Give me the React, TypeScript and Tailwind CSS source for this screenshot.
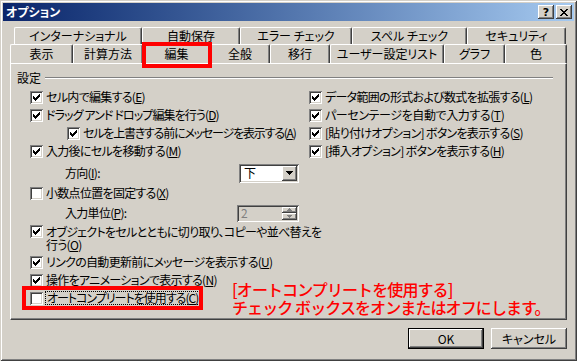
import React from "react";

const RAISED =
  "shadow-[inset_-1px_-1px_#404040,inset_1px_1px_#fff,inset_-2px_-2px_#808080,inset_2px_2px_#d4d0c8]";
const SUNKEN =
  "shadow-[inset_1px_1px_#808080,inset_-1px_-1px_#fff,inset_2px_2px_#404040,inset_-2px_-2px_#d4d0c8]";

function Check({ on }: { on: boolean }) {
  return (
    <span className={`w-[13px] h-[13px] shrink-0 bg-white flex items-center justify-center ${SUNKEN}`}>
      {on && (
        <svg width="7" height="7" viewBox="0 0 7 7" shapeRendering="crispEdges">
          <path
            d="M0 2h1v1h1v1h1v-1h1v-1h1v-1h1v-1h1v3h-1v1h-1v1h-1v1h-1v1h-1v-1h-1v-1h-1z"
            fill="#000"
          />
        </svg>
      )}
    </span>
  );
}

function Row({
  on,
  children,
  className = "",
}: {
  on: boolean;
  children: React.ReactNode;
  className?: string;
}) {
  return (
    <div className={`flex items-center gap-[3px] h-[18px] whitespace-nowrap ${className}`}>
      <Check on={on} />
      <span>{children}</span>
    </div>
  );
}

function Tab({
  label,
  className = "",
  marked,
}: {
  label: string;
  className?: string;
  marked?: boolean;
}) {
  return (
    <div
      className={`relative flex items-center justify-center border-t border-l border-white rounded-t-[2px] border-r border-r-[#404040] shadow-[inset_-1px_0_#808080] whitespace-nowrap ${className}`}
    >
      {label}
      {marked && (
        <div className="absolute left-[-2px] top-[-3px] w-[70px] h-[26px] border-[4px] border-[#ff0000]" />
      )}
    </div>
  );
}

function TitleBar() {
  return (
    <div className="h-[18px] flex items-center justify-between bg-gradient-to-r from-[#0a246a] to-[#a6caf0] pl-[3px] pr-[2px]">
      <span className="text-white font-bold text-[12px]">オプション</span>
      <div className="flex gap-[2px]">
        <div className={`w-[16px] h-[14px] bg-[#d4d0c8] flex items-center justify-center ${RAISED}`}>
          <span className="font-['DejaVu_Sans',sans-serif] font-bold text-[11px] leading-[11px]">?</span>
        </div>
        <div className={`w-[16px] h-[14px] bg-[#d4d0c8] flex items-center justify-center ${RAISED}`}>
          <svg width="8" height="7" viewBox="0 0 8 7" shapeRendering="crispEdges">
            <path
              d="M0 0h2v1H0zM6 0h2v1H6zM1 1h2v1H1zM5 1h2v1H5zM2 2h4v1H2zM3 3h2v1H3zM2 4h4v1H2zM1 5h2v1H1zM5 5h2v1H5zM0 6h2v1H0zM6 6h2v1H6z"
              fill="#000"
            />
          </svg>
        </div>
      </div>
    </div>
  );
}

function Select() {
  return (
    <div className={`w-[60px] h-[19px] bg-white flex items-center justify-between p-[2px] ${SUNKEN}`}>
      <span className="pl-[3px]">下</span>
      <div className={`w-[15px] h-full bg-[#d4d0c8] flex items-center justify-center ${RAISED}`}>
        <svg width="7" height="4" viewBox="0 0 7 4" shapeRendering="crispEdges">
          <path d="M0 0h7v1h-1v1h-1v1h-1v1h-1v-1h-1v-1h-1v-1h-1z" fill="#000" />
        </svg>
      </div>
    </div>
  );
}

function Spinner() {
  return (
    <div className={`w-[62px] h-[17px] bg-[#d4d0c8] flex items-center justify-between p-[2px] ${SUNKEN}`}>
      <span className="pl-[2px] text-[#808080]">2</span>
      <div className="w-[15px] h-full flex flex-col">
        <div className={`flex-1 bg-[#d4d0c8] flex items-center justify-center ${RAISED}`}>
          <svg width="5" height="3" viewBox="0 0 5 3" shapeRendering="crispEdges">
            <path d="M2 0h1v1h1v1h1v1H0v-1h1v-1h1z" fill="#808080" />
          </svg>
        </div>
        <div className={`flex-1 bg-[#d4d0c8] flex items-center justify-center ${RAISED}`}>
          <svg width="5" height="3" viewBox="0 0 5 3" shapeRendering="crispEdges">
            <path d="M0 0h5v1h-1v1h-1v1h-1v-1h-1v-1h-1z" fill="#808080" />
          </svg>
        </div>
      </div>
    </div>
  );
}

function Button({ label, primary }: { label: string; primary?: boolean }) {
  return (
    <div
      className={`w-[76px] h-[21px] bg-[#d4d0c8] flex items-center justify-center ${
        primary ? "border border-black" : ""
      } ${RAISED}`}
    >
      {label}
    </div>
  );
}

function Panel() {
  return (
    <div className="relative h-[257px] border-t border-l border-white border-r border-b border-r-[#404040] border-b-[#404040] shadow-[inset_-1px_-1px_#808080] pl-[6px] pr-[13px] pt-[6px]">
      <div className="flex items-center h-[16px] gap-[4px]">
        <span>設定</span>
        <div className="flex-1 h-[2px] border-t border-t-[#808080] border-b border-b-white" />
      </div>

      <div className="flex mt-[2px] tracking-[-0.7px]">
        <div className="w-[279px] ml-[13px] flex flex-col">
          <Row on>
            セル内で編集する(<u>E</u>)
          </Row>
          <Row on className="tracking-[-0.9px]">
            ドラッグ アンド ドロップ編集を行う(<u>D</u>)
          </Row>
          <Row on className="ml-[37px] tracking-[-1.2px]">
            セルを上書きする前にメッセージを表示する(<u>A</u>)
          </Row>
          <Row on>
            入力後にセルを移動する(<u>M</u>)
          </Row>
          <div className="flex items-center h-[22px] mt-[2px]">
            <span className="ml-[35px] w-[174px]">
              方向(<u>I</u>):
            </span>
            <Select />
          </div>
          <Row on={false}>
            小数点位置を固定する(<u>X</u>)
          </Row>
          <div className="flex items-center h-[20px] mt-[1px]">
            <span className="ml-[35px] w-[172px]">
              入力単位(<u>P</u>):
            </span>
            <Spinner />
          </div>
          <div className="flex items-start gap-[3px] mt-[2px] leading-[13px] whitespace-nowrap">
            <Check on />
            <span>
              オブジェクトをセルとともに切り取り、コピーや並べ替えを
              <br />
              行う(<u>O</u>)
            </span>
          </div>
          <Row on className="mt-[2px]">
            リンクの自動更新前にメッセージを表示する(<u>U</u>)
          </Row>
          <Row on>
            操作をアニメーションで表示する(<u>N</u>)
          </Row>
          <div className="relative flex items-center gap-[2px] h-[18px] whitespace-nowrap">
            <Check on={false} />
            <span className="border border-dotted border-black px-[1px] leading-[12px] tracking-[-1px]">
              オートコンプリートを使用する(<u>C</u>)
            </span>
            <div className="absolute left-[-8px] top-[-3px] w-[181px] h-[24px] border-[4px] border-[#ff0000]" />
          </div>
        </div>

        <div className="flex flex-col">
          <Row on>
            データ範囲の形式および数式を拡張する(<u>L</u>)
          </Row>
          <Row on className="tracking-[-0.4px]">
            パーセンテージを自動で入力する(<u>T</u>)
          </Row>
          <Row on>
            [貼り付けオプション] ボタンを表示する(<u>S</u>)
          </Row>
          <Row on>
            [挿入オプション] ボタンを表示する(<u>H</u>)
          </Row>
        </div>
      </div>

      <div className="absolute left-[221px] top-[216px] text-[#ff0000] text-[16px] leading-[18px] font-medium tracking-[-0.9px] [font-feature-settings:normal] whitespace-nowrap">
        <div>[オートコンプリートを使用する]</div>
        <div>チェック ボックスをオンまたはオフにします。</div>
      </div>
    </div>
  );
}

export default function App() {
  return (
    <div className="w-[577px] h-[361px] bg-[#d4d0c8] p-[3px] flex flex-col text-[12px] leading-[14px] text-black font-['Noto_Sans_CJK_JP',sans-serif] [font-feature-settings:'palt'] shadow-[inset_1px_1px_#d4d0c8,inset_-1px_-1px_#404040,inset_2px_2px_#fff,inset_-2px_-2px_#808080]">
      <TitleBar />
      <div className="px-[7px] pt-[6px] flex flex-col">
        <div className="flex h-[17px] ml-[4px]">
          <Tab label="インターナショナル" className="w-[128px]" />
          <Tab label="自動保存" className="w-[98px]" />
          <Tab label="エラー チェック" className="w-[112px]" />
          <Tab label="スペル チェック" className="w-[115px]" />
          <Tab label="セキュリティ" className="w-[99px]" />
        </div>
        <div className="flex h-[19px]">
          <Tab label="表示" className="w-[63px]" />
          <Tab label="計算方法" className="w-[70px]" />
          <Tab label="編集" className="w-[67px] z-10" marked />
          <Tab label="全般" className="w-[60px]" />
          <Tab label="移行" className="w-[60px]" />
          <Tab label="ユーザー設定リスト" className="w-[114px]" />
          <Tab label="グラフ" className="w-[61px]" />
          <Tab label="色" className="w-[62px]" />
        </div>
        <Panel />
        <div className="flex justify-end gap-[7px] mt-[8px]">
          <Button label="OK" primary />
          <Button label="キャンセル" />
        </div>
      </div>
    </div>
  );
}
